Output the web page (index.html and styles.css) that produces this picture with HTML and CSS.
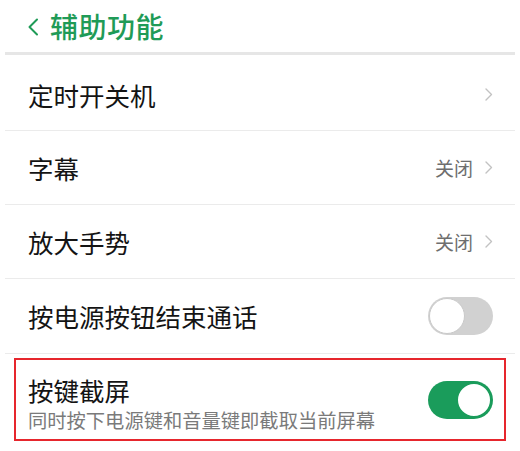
FILE: index.html
```html
<!DOCTYPE html>
<html lang="zh">
<head>
<meta charset="utf-8">
<link rel="stylesheet" href="styles.css">
</head>
<body>
<div class="screen">
  <header class="topbar">
    <svg class="back" width="12" height="18" viewBox="0 0 12 18"><path d="M10 1.5 L2.5 9 L10 16.5" fill="none" stroke="#1f9b57" stroke-width="2" stroke-linecap="round" stroke-linejoin="round"/></svg>
    <span class="title">辅助功能</span>
  </header>
  <div class="topline"></div>
  <div class="list">
    <div class="row row-first">
      <span class="label">定时开关机</span>
      <span class="right"><svg class="chev" width="8" height="13" viewBox="0 0 8 13"><path d="M1 1 L6.5 6.5 L1 12" fill="none" stroke="#c2c2c2" stroke-width="1.4" stroke-linecap="round" stroke-linejoin="round"/></svg></span>
    </div>
    <div class="row">
      <span class="label">字幕</span>
      <span class="right"><span class="value">关闭</span><svg class="chev" width="8" height="13" viewBox="0 0 8 13"><path d="M1 1 L6.5 6.5 L1 12" fill="none" stroke="#c2c2c2" stroke-width="1.4" stroke-linecap="round" stroke-linejoin="round"/></svg></span>
    </div>
    <div class="row">
      <span class="label">放大手势</span>
      <span class="right"><span class="value">关闭</span><svg class="chev" width="8" height="13" viewBox="0 0 8 13"><path d="M1 1 L6.5 6.5 L1 12" fill="none" stroke="#c2c2c2" stroke-width="1.4" stroke-linecap="round" stroke-linejoin="round"/></svg></span>
    </div>
    <div class="row row-toggle">
      <span class="label">按电源按钮结束通话</span>
      <span class="switch"><span class="knob"></span></span>
    </div>
    <div class="row-last">
      <div class="highlight">
        <div class="texts">
          <div class="label">按键截屏</div>
          <div class="sub">同时按下电源键和音量键即截取当前屏幕</div>
        </div>
        <span class="switch on"><span class="knob"></span></span>
      </div>
    </div>
  </div>
</div>
</body>
</html>
```

FILE: styles.css
```css
html, body {
  margin: 0;
  padding: 0;
  background: #ffffff;
}

body {
  font-family: "Noto Sans CJK SC", "Noto Sans", sans-serif;
  color: #151515;
}

.screen {
  width: 520px;
  height: 451px;
  overflow: hidden;
  background: #fff;
}

.topbar {
  height: 52px;
  display: flex;
  align-items: center;
  padding-left: 27px;
  box-sizing: border-box;
}

.back {
  margin-right: 11px;
  margin-top: 2px;
}

.title {
  font-size: 28px;
  color: #1f9b57;
  line-height: 1;
  letter-spacing: 0.5px;
  font-weight: 500;
}

.topline {
  height: 3px;
  margin: 0 5px;
  background: #e6e6e6;
}

.list {
  margin: 0 5px;
}

.row {
  height: 73px;
  border-bottom: 1px solid #ebebeb;
  display: flex;
  align-items: center;
  justify-content: space-between;
  padding: 0 22px 0 23px;
}

.row-first {
  padding-top: 4px;
  box-sizing: border-box;
  height: 76px;
}

.row-toggle {
  height: 74px;
  padding-right: 22px;
}

.label {
  font-size: 25.5px;
  line-height: 30px;
  color: #141414;
}

.right {
  display: flex;
  align-items: center;
}

.value {
  font-size: 19px;
  color: #6e6e6e;
  margin-right: 12px;
}

.chev {
  display: block;
}

.switch {
  width: 65px;
  height: 38px;
  border-radius: 19px;
  background: #d1d1d1;
  position: relative;
  box-sizing: border-box;
  flex: none;
}

.switch .knob {
  position: absolute;
  top: 1px;
  left: 1px;
  width: 36px;
  height: 36px;
  border-radius: 50%;
  background: #fff;
  box-sizing: border-box;
  border: 1px solid #c9c9c9;
}

.switch.on {
  background: #1a9c5b;
}

.switch.on .knob {
  left: auto;
  right: 1px;
  border: 2px solid #1a9c5b;
}

.row-last {
  padding: 4px 9px 0;
}

.highlight {
  height: 83px;
  box-sizing: border-box;
  border: 2px solid #e6262d;
  display: flex;
  align-items: center;
  justify-content: space-between;
  padding: 0 11px 0 12px;
}

.texts {
  padding-top: 8px;
}

.sub {
  font-size: 19.3px;
  line-height: 24px;
  color: #7a7a7a;
  margin-top: 3px;
}
```
